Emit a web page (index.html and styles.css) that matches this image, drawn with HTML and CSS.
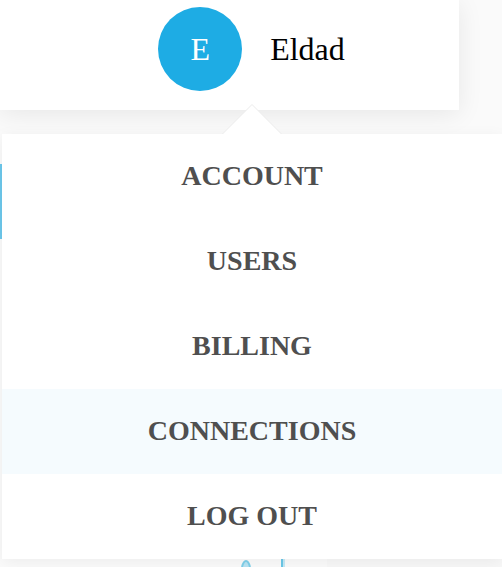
FILE: index.html
```html
<!DOCTYPE html>
<html lang="en">
<head>
<meta charset="utf-8">
<meta name="viewport" content="width=device-width, initial-scale=1">
<title>Account menu</title>
<link rel="stylesheet" href="styles.css">
</head>
<body>
<header class="topbar">
  <div class="user">
    <span class="avatar">E</span>
    <span class="user-name">Eldad</span>
  </div>
  <nav class="menu">
    <svg class="menu-arrow" width="60" height="31" viewBox="0 0 60 31" aria-hidden="true">
      <path d="M0.5 30 30 0.5 59.5 30" fill="#fff" stroke="#ebebeb"/>
      <path d="M2 30h56v1H2z" fill="#fff"/>
    </svg>
    <a class="menu-item" href="#">ACCOUNT</a>
    <a class="menu-item" href="#">USERS</a>
    <a class="menu-item" href="#">BILLING</a>
    <a class="menu-item active" href="#">CONNECTIONS</a>
    <a class="menu-item" href="#">LOG OUT</a>
  </nav>
</header>
<main class="content">
  <div class="accent"></div>
  <div class="panels">
    <div class="panel">
      <svg class="drawing" width="60" height="8" viewBox="0 0 60 8" aria-hidden="true">
        <path d="M4 8C5 4 6 2 8 2s3 2 4 6" fill="#b9e4f3" stroke="#7fd0ea" stroke-width="2"/>
        <path d="M43 0h2v8h-2z" fill="#6cc8e8"/>
        <path d="M45 0h2v8h-2z" fill="#c5eaf6"/>
      </svg>
    </div>
    <div class="panel shaded"></div>
  </div>
</main>
</body>
</html>
```
FILE: styles.css
```css
* {
  box-sizing: border-box;
}

body {
  display: flex;
  flex-direction: column;
  min-height: 100vh;
  margin: 0;
  background: #fafafa;
  font-family: "Liberation Serif", "Times New Roman", serif;
}

.topbar {
  position: relative;
  height: 110px;
  margin-right: 43px;
  padding: 7px 0 0 44px;
  background: #fff;
  box-shadow: 0 4px 24px rgba(0, 0, 0, 0.08);
}

.user {
  display: flex;
  align-items: center;
  justify-content: center;
  gap: 28px;
  font-size: 32px;
  color: #000;
}

.avatar {
  display: flex;
  align-items: center;
  justify-content: center;
  width: 84px;
  height: 84px;
  border-radius: 50%;
  background: #1eace4;
  color: #fff;
}

.menu {
  position: absolute;
  z-index: 1;
  top: 134px;
  left: 2px;
  width: 100vw;
  max-width: 500px;
  background: #fff;
  box-shadow: 0 4px 16px rgba(0, 0, 0, 0.06);
}

.menu-arrow {
  position: absolute;
  bottom: 100%;
  left: 50%;
  margin: 0 0 -1px -30px;
}

.menu-item {
  display: block;
  padding-bottom: 2px;
  color: #4f4f4f;
  font-size: 28px;
  font-weight: bold;
  line-height: 83px;
  text-align: center;
  text-decoration: none;
}

.menu-item.active {
  background: #f5fbfe;
}

.content {
  display: flex;
  flex: 1;
  flex-direction: column;
  justify-content: space-between;
  padding-top: 54px;
}

.accent {
  width: 16px;
  height: 75px;
  background: #6cc8ec;
}

.panels {
  display: grid;
  grid-template-columns: 327fr 175fr;
}

.panel {
  display: flex;
  height: 8px;
  justify-content: flex-end;
  padding-right: 29px;
  background: #fbfbfb;
}

.panel.shaded {
  background: #f8f8f8;
}
```
